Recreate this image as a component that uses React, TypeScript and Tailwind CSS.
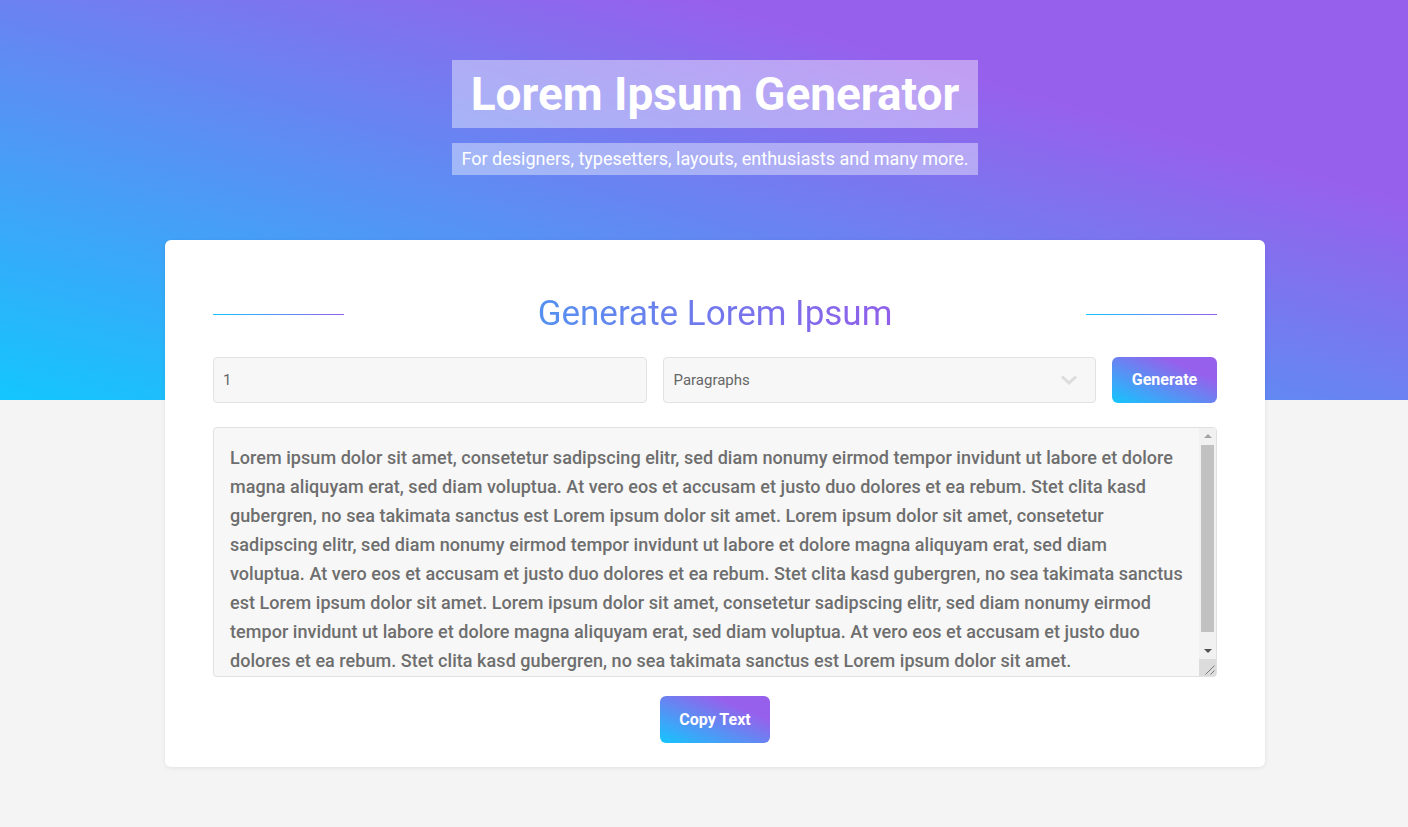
import { useState } from "react";

const LOREM =
  "Lorem ipsum dolor sit amet, consetetur sadipscing elitr, sed diam nonumy eirmod tempor invidunt ut labore et dolore magna aliquyam erat, sed diam voluptua. At vero eos et accusam et justo duo dolores et ea rebum. Stet clita kasd gubergren, no sea takimata sanctus est Lorem ipsum dolor sit amet. Lorem ipsum dolor sit amet, consetetur sadipscing elitr, sed diam nonumy eirmod tempor invidunt ut labore et dolore magna aliquyam erat, sed diam voluptua. At vero eos et accusam et justo duo dolores et ea rebum. Stet clita kasd gubergren, no sea takimata sanctus est Lorem ipsum dolor sit amet. Lorem ipsum dolor sit amet, consetetur sadipscing elitr, sed diam nonumy eirmod tempor invidunt ut labore et dolore magna aliquyam erat, sed diam voluptua. At vero eos et accusam et justo duo dolores et ea rebum. Stet clita kasd gubergren, no sea takimata sanctus est Lorem ipsum dolor sit amet.";

function FakeScrollbar() {
  return (
    <div className="pointer-events-none absolute top-px right-px bottom-px flex w-[17px] flex-col bg-[#f1f1f1]">
      <div className="flex h-4 items-center justify-center">
        <span className="h-0 w-0 border-x-[4px] border-b-[4px] border-x-transparent border-b-[#a3a3a3]" />
      </div>
      <div className="flex-1 px-[2px] pt-px pb-[11px]">
        <div className="h-full bg-[#c1c1c1]" />
      </div>
      <div className="flex h-4 items-center justify-center">
        <span className="h-0 w-0 border-x-[4px] border-t-[4px] border-x-transparent border-t-[#505050]" />
      </div>
      <div className="h-[17px] bg-[#dcdcdc]">
        <svg width="17" height="17" viewBox="0 0 17 17" stroke="#7a7a7a" strokeWidth="1">
          <path d="M15.5 6.5 6.5 15.5M15.5 11.5 11.5 15.5" />
        </svg>
      </div>
    </div>
  );
}

export default function App() {
  const [count, setCount] = useState("1");
  const [text, setText] = useState(LOREM);

  return (
    <div className="min-h-[827px] bg-[#f4f4f4] font-['Roboto',sans-serif]">
      <header className="flex h-[400px] flex-col items-center bg-[linear-gradient(to_top_right,#13c6fd,#9760ec_75%)] pt-[60px] pl-[22px]">
        <div className="flex w-[526px] flex-col gap-[15px] text-center text-white">
          <h1 className="bg-white/40 py-[5px] text-[46px] leading-[58px] font-bold">Lorem Ipsum Generator</h1>
          <p className="bg-white/40 text-[18px] leading-[32px]">
            For designers, typesetters, layouts, enthusiasts and many more.
          </p>
        </div>
      </header>

      <main className="-mt-[160px] flex justify-center pb-[60px] pl-[22px]">
        <section className="w-[1100px] rounded-md bg-white px-12 pt-[50px] pb-6 shadow-[0_1px_4px_rgba(0,0,0,0.08)]">
          <div className="flex items-center">
            <span className="h-px w-[131px] bg-[linear-gradient(to_right,#13c6fd,#9760ec)]" />
            <h2 className="flex-1 text-center text-[35px] leading-[48px]">
              <span className="bg-[linear-gradient(to_right,#5591ef,#905fea)] bg-clip-text text-transparent">
                Generate Lorem Ipsum
              </span>
            </h2>
            <span className="h-px w-[131px] bg-[linear-gradient(to_right,#13c6fd,#9760ec)]" />
          </div>

          <div className="mt-[19px] flex gap-4">
            <div className="min-w-0 flex-1">
              <input
                value={count}
                onChange={(e) => setCount(e.target.value)}
                className="h-[46px] w-full rounded border border-[#e2e2e2] bg-[#f7f7f7] px-[9px] text-[15px] text-[#666] outline-none"
              />
            </div>
            <div className="relative min-w-0 flex-1">
              <select className="h-[46px] w-full appearance-none rounded border border-[#e2e2e2] bg-[#f7f7f7] px-[10px] text-[15px] text-[#666] outline-none">
                <option>Paragraphs</option>
                <option>Sentences</option>
                <option>Words</option>
              </select>
              <svg
                className="pointer-events-none absolute top-[17px] right-[18px]"
                width="18"
                height="12"
                viewBox="0 0 18 12"
                fill="none"
                stroke="#dcdcdc"
                strokeWidth="3"
              >
                <path d="M2 2.5 9 9l7-6.5" />
              </svg>
            </div>
            <button
              onClick={() => setText(LOREM)}
              className="h-[46px] w-[105px] rounded-md bg-[linear-gradient(to_top_right,#13c6fd,#9760ec_75%)] text-[16px] font-bold text-white"
            >
              Generate
            </button>
          </div>

          <div className="relative mt-6">
            <textarea
              value={text}
              onChange={(e) => setText(e.target.value)}
              className="block h-[250px] w-full resize-none overflow-hidden rounded border border-[#e0e0e0] bg-[#f7f7f7] pt-[15px] pr-[33px] pb-[14px] pl-4 text-[18px] leading-[29px] font-medium tracking-[0.05px] text-[#6e6e6e] outline-none"
            />
            <FakeScrollbar />
          </div>

          <div className="mt-[19px] flex justify-center">
            <button className="h-[47px] w-[110px] rounded-md bg-[linear-gradient(to_top_right,#13c6fd,#9760ec_75%)] text-[16px] font-bold text-white">
              Copy Text
            </button>
          </div>
        </section>
      </main>
    </div>
  );
}
